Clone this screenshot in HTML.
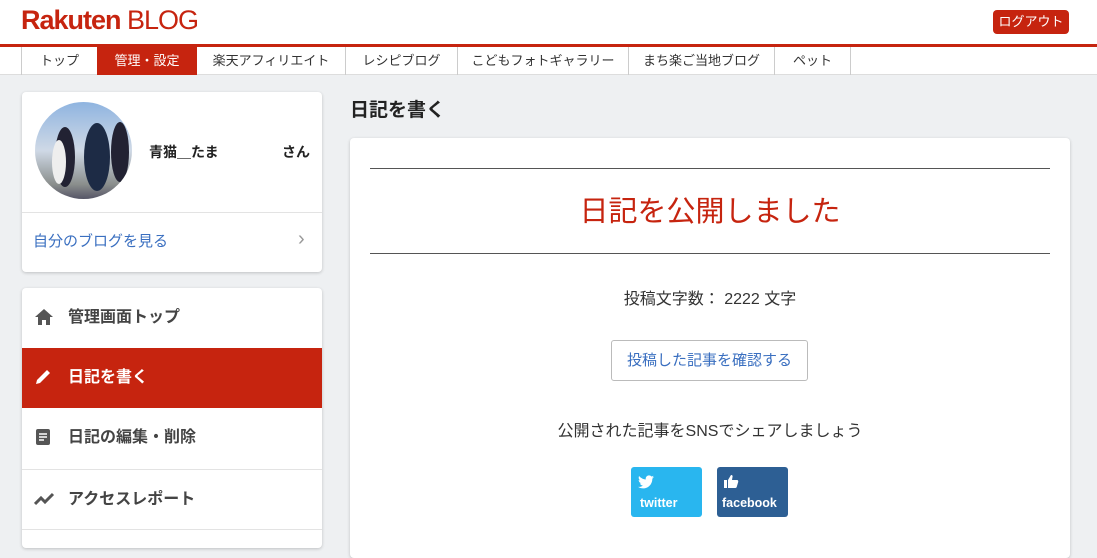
<!DOCTYPE html>
<html><head><meta charset="utf-8"><style>
*{box-sizing:border-box;margin:0;padding:0}
body{width:1097px;height:535px;overflow:hidden;background:#eef0f2;font-family:"Liberation Sans","Noto Sans CJK JP",sans-serif;position:relative;color:#333}
.hdr{position:absolute;left:0;top:0;width:1097px;height:44px;background:#fff}
.logo{position:absolute;left:21px;top:5px;font-size:27px;color:#c6240f;letter-spacing:-1px}
.logo b{font-weight:bold}
.out{position:absolute;left:993px;top:10px;width:76px;height:24px;background:#c6240f;color:#fff;font-size:13px;line-height:24px;text-align:center;border-radius:4px}
.redline{position:absolute;left:0;top:44px;width:1097px;height:3px;background:#c6240f}
.nav{position:absolute;left:0;top:47px;width:1097px;height:28px;background:#fff;border-bottom:1px solid #ddd;font-size:13px}
.nav span{position:absolute;top:0;height:28px;line-height:28px;text-align:center;border-left:1px solid #ccc}
.nav .on{background:#c6240f;color:#fff;border:none}
.card{position:absolute;background:#fff;border-radius:4px;box-shadow:0 1px 3px rgba(0,0,0,.2)}
.av{position:absolute;left:13px;top:10px;width:97px;height:97px;border-radius:50%;background:linear-gradient(180deg,#8fb4e0 0%,#cfd9e6 50%,#8a8e8c 85%,#556 100%);overflow:hidden}
.mi{position:absolute;left:0;width:300px;height:60px;line-height:60px;font-size:16px;font-weight:bold;color:#444;border-top:1px solid #e3e3e3;padding-left:46px}
.mi svg{position:absolute;left:12px;top:20px}
</style></head><body>
<div class="hdr"><div class="logo"><b>Rakuten</b> BLOG</div><div class="out">ログアウト</div></div>
<div class="redline"></div>
<div class="nav">
<span style="left:21px;width:76px">トップ</span>
<span class="on" style="left:97px;width:100px">管理・設定</span>
<span style="left:197px;width:148px;border:none">楽天アフィリエイト</span>
<span style="left:345px;width:112px">レシピブログ</span>
<span style="left:457px;width:171px">こどもフォトギャラリー</span>
<span style="left:628px;width:146px">まち楽ご当地ブログ</span>
<span style="left:774px;width:76px">ペット</span>
<span style="left:850px;width:1px"></span>
</div>
<div class="card" style="left:22px;top:92px;width:300px;height:180px">
<div class="av"><svg width="97" height="97"><ellipse cx="30" cy="55" rx="10" ry="30" fill="#223"/><ellipse cx="62" cy="55" rx="13" ry="34" fill="#1d2b45"/><ellipse cx="85" cy="50" rx="9" ry="30" fill="#223"/><ellipse cx="24" cy="60" rx="7" ry="22" fill="#eee"/></svg></div>
<div style="position:absolute;left:127px;top:50px;font-size:14px;font-weight:bold;color:#222">青猫＿たま</div>
<div style="position:absolute;left:260px;top:50px;font-size:14px;font-weight:bold;color:#222">さん</div>
<div style="position:absolute;left:0;top:120px;width:300px;border-top:1px solid #e3e3e3"></div>
<div style="position:absolute;left:11px;top:138px;font-size:15px;color:#3a6fc0">自分のブログを見る</div>
<div style="position:absolute;left:276px;top:136px;font-size:20px;color:#999">›</div>
</div>
<div class="card" style="left:22px;top:288px;width:300px;height:260px;overflow:hidden">
<div class="mi" style="top:0;border:none"><svg width="20" height="18" viewBox="0 0 20 18"><path d="M10 1L1 9h3v8h4v-5h4v5h4V9h3z" fill="#555"/></svg>管理画面トップ</div>
<div class="mi" style="top:60px;background:#c6240f;color:#fff;border:none"><svg width="18" height="18" viewBox="0 0 18 18"><path d="M2 16l1-4L13 2l3 3L6 15z" fill="#fff"/></svg>日記を書く</div>
<div class="mi" style="top:120px;border:none"><svg width="18" height="18" viewBox="0 0 18 18"><rect x="2" y="1" width="14" height="16" rx="2" fill="#555"/><path d="M5 6h8M5 9h8M5 12h5" stroke="#fff" stroke-width="1.5"/></svg>日記の編集・削除</div>
<div class="mi" style="top:181px"><svg width="22" height="18" viewBox="0 0 22 18"><path d="M1 14l6-6 4 4 8-8" stroke="#555" stroke-width="3" fill="none"/></svg>アクセスレポート</div>
<div style="position:absolute;left:0;top:241px;width:300px;border-top:1px solid #e3e3e3"></div>
</div>
<div style="position:absolute;left:350px;top:95px;font-size:19px;font-weight:bold;color:#222">日記を書く</div>
<div class="card" style="left:350px;top:138px;width:720px;height:420px">
<div style="position:absolute;left:20px;top:30px;width:680px;border-top:1px solid #555"></div>
<div style="position:absolute;left:0;top:50px;width:720px;text-align:center;font-size:29px;color:#c6240f">日記を公開しました</div>
<div style="position:absolute;left:20px;top:115px;width:680px;border-top:1px solid #555"></div>
<div style="position:absolute;left:0;top:147px;width:720px;text-align:center;font-size:16px;color:#333">投稿文字数： 2222 文字</div>
<div style="position:absolute;left:261px;top:202px;width:197px;height:41px;border:1px solid #bbb;border-radius:3px;text-align:center;line-height:39px;font-size:15px;color:#3a6fc0">投稿した記事を確認する</div>
<div style="position:absolute;left:0;top:279px;width:720px;text-align:center;font-size:16px;color:#333">公開された記事をSNSでシェアしましょう</div>
<div style="position:absolute;left:281px;top:329px;width:71px;height:50px;background:#29b6ef;border-radius:3px;color:#fff;font-weight:bold;font-size:13px"><svg style="position:absolute;left:7px;top:8px" width="16" height="14" viewBox="0 0 16 14"><path d="M16 2c-.6.3-1.2.4-1.9.5.7-.4 1.2-1 1.4-1.8-.6.4-1.3.6-2.1.8C12.8.8 12 .4 11 .4 9.2.4 7.7 1.9 7.7 3.7c0 .3 0 .5.1.8C5.1 4.3 2.7 3 1.1 1c-.3.5-.4 1-.4 1.7 0 1.1.6 2.1 1.5 2.7-.5 0-1-.2-1.5-.4 0 1.6 1.1 2.9 2.6 3.2-.5.1-1 .2-1.5.1.4 1.3 1.6 2.3 3.1 2.3C3.7 11.5 2 12 .1 11.900 1.5 12.900 3.2 13.400 5 13.400c6 0 9.3-5 9.3-9.300v-.4C15 3.200 15.500 2.600 16 2z" fill="#fff"/></svg><div style="position:absolute;left:9px;top:29px;font-size:12.5px">twitter</div></div>
<div style="position:absolute;left:367px;top:329px;width:71px;height:50px;background:#2d5f94;border-radius:3px;color:#fff;font-weight:bold;font-size:13px"><svg style="position:absolute;left:7px;top:8px" width="15" height="13" viewBox="0 0 15 13"><rect x="0" y="5" width="3" height="8" fill="#fff"/><path d="M4 5l3-5c1 0 2 .5 1.5 2L8 5h5c1 0 1.5 1 1.2 2l-1.5 5c-.2.6-.7 1-1.3 1H4z" fill="#fff"/></svg><div style="position:absolute;left:5px;top:29px;font-size:12.5px">facebook</div></div>
</div>
</body></html>
